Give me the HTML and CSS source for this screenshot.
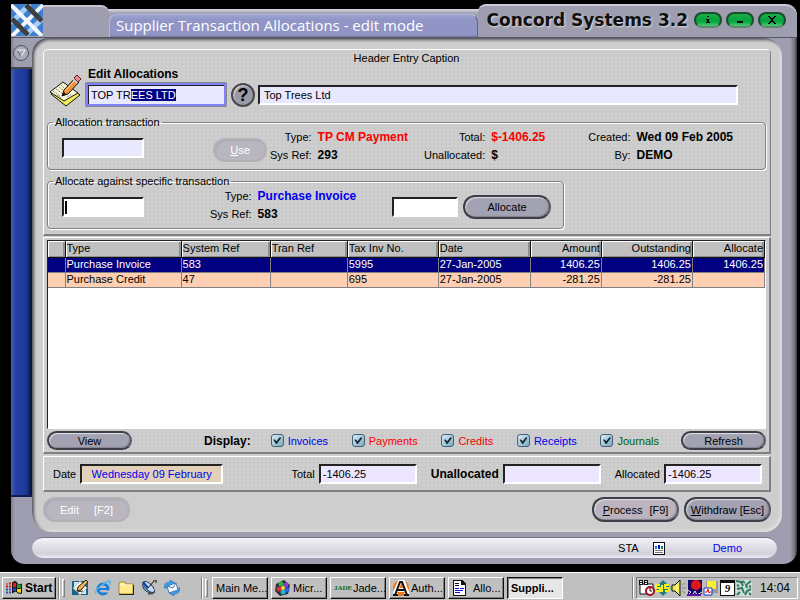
FILE: index.html
```html
<!DOCTYPE html>
<html lang="en">
<head>
<meta charset="utf-8">
<title>Supplier Transaction Allocations</title>
<link rel="stylesheet" href="styles.css">
</head>
<body>
<main class="window">
  <header class="titlebar">
    <svg class="logo" viewBox="0 0 32 32" aria-hidden="true">
      <rect width="32" height="32" fill="#3d7fce"/>
      <g fill="none" stroke-width="4">
        <path d="M0 1L31 32M32 1L1 32" stroke="#f4f8fc"/>
        <path d="M19 0L0 19M32 14L14 32" stroke="#a9cdf6" stroke-width="5"/>
        <path d="M15 1L31 17M1 15L17 31" stroke="#3d3f42" stroke-width="5"/>
        <path d="M4 5L11 12M21 22L27 28" stroke="#f4f8fc"/>
      </g>
    </svg>
    <div class="tab-left"></div>
    <h1 class="tab-title">Supplier Transaction Allocations - edit mode</h1>
    <div class="tab-brand">
      <span class="brand">Concord Systems 3.2</span>
      <button class="pill" type="button" aria-label="Information"><svg viewBox="0 0 8 8"><path d="M3 0h2v1H3zM2 3h3v3h1v1H2V6h1V4H2z"/></svg></button>
      <button class="pill" type="button" aria-label="Minimise"><svg viewBox="0 0 8 8"><path d="M1 5h6v2H1z"/></svg></button>
      <button class="pill" type="button" aria-label="Close"><svg viewBox="0 0 8 8"><path d="M0 0h2v1h1v1h2V1h1V0h2v1H7v1H6v1H5v2h1v1h1v1h1v1H6V7H5V6H3v1H2v1H0V7h1V6h1V5h1V3H2V2H1V1H0z"/></svg></button>
    </div>
  </header>

  <aside class="rail">
    <button class="rail-btn" type="button" aria-label="Open menu"><svg viewBox="0 0 14 14"><path d="M4 4h7L7 11z" fill="none" stroke="#f2f2f8"/><path d="M4 5l3 6" stroke="#55555f"/></svg></button>
    <div class="rail-bar"></div>
  </aside>

  <div class="client">
    <section class="panel panel-entry">
      <p class="caption">Header Entry Caption</p>
      <div class="supplier">
        <svg class="note" viewBox="0 0 33 32" aria-hidden="true">
          <path d="M2 19L16 9l15 11-14 11z" fill="#f5ee58" stroke="#111"/>
          <path d="M1 17L14 7l15 11-14 8z" fill="#f8f6d6" stroke="#111"/>
          <path d="M4 16l7 5M7 14l7 5M10 12l4 3M12 10l3 3M8 20l4 3M18 22l5-3" stroke="#8f8f78" stroke-dasharray="2 1"/>
          <path d="M13 21l2-6 11-12 4 4-11 12z" fill="#f0933a" stroke="#111"/>
          <path d="M16 16L26 5" stroke="#ffd596"/>
          <path d="M25 3l3-3 4 4-3 3z" fill="#ee8a94" stroke="#5c1820"/>
          <path d="M24 4l4 4" stroke="#c8c8d0" stroke-width="2"/>
          <path d="M13 21l2-4 2 2z" fill="#111"/>
        </svg>
        <div class="supplier-code">
          <label for="code">Edit Allocations</label>
          <input id="code" type="text" value="TOP TREES LTD" autocomplete="off" spellcheck="false">
        </div>
        <button class="help" type="button">?</button>
        <input class="field supplier-name" type="text" value="Top Trees Ltd" aria-label="Supplier name">
      </div>

      <fieldset class="group">
        <legend>Allocation transaction</legend>
        <input class="field ref" type="text" aria-label="Transaction reference">
        <button class="btn disabled use" type="button"><u>U</u>se</button>
        <dl class="facts facts-a"><dt>Type:</dt><dd class="red">TP CM Payment</dd><dt>Sys Ref:</dt><dd>293</dd></dl>
        <dl class="facts facts-b"><dt>Total:</dt><dd class="red">$-1406.25</dd><dt>Unallocated:</dt><dd>$</dd></dl>
        <dl class="facts facts-c"><dt>Created:</dt><dd>Wed 09 Feb 2005</dd><dt>By:</dt><dd>DEMO</dd></dl>
      </fieldset>

      <fieldset class="group group-specific">
        <legend>Allocate against specific transaction</legend>
        <input class="field ref white caret" type="text" aria-label="Specific transaction">
        <dl class="facts facts-d"><dt>Type:</dt><dd class="blue">Purchase Invoice</dd><dt>Sys Ref:</dt><dd>583</dd></dl>
        <input class="field amount white" type="text" aria-label="Amount">
        <button class="btn allocate" type="button">Allocate</button>
      </fieldset>
    </section>

    <section class="panel panel-list">
      <div class="grid-box">
        <table>
          <colgroup><col class="c-mark"><col class="c-type"><col class="c-sys"><col class="c-tran"><col class="c-tax"><col class="c-date"><col class="c-amt"><col class="c-out"><col class="c-alloc"></colgroup>
          <thead><tr><th></th><th>Type</th><th>System Ref</th><th>Tran Ref</th><th>Tax Inv No.</th><th>Date</th><th class="num">Amount</th><th class="num">Outstanding</th><th class="num">Allocate</th></tr></thead>
          <tbody>
            <tr class="selected"><td></td><td>Purchase Invoice</td><td>583</td><td></td><td>5995</td><td>27-Jan-2005</td><td class="num">1406.25</td><td class="num">1406.25</td><td class="num">1406.25</td></tr>
            <tr><td></td><td>Purchase Credit</td><td>47</td><td></td><td>695</td><td>27-Jan-2005</td><td class="num">-281.25</td><td class="num">-281.25</td><td class="num"></td></tr>
          </tbody>
        </table>
      </div>
      <div class="display">
        <button class="btn" type="button">View</button>
        <strong>Display:</strong>
        <div class="checks">
          <label class="blue"><input type="checkbox" checked>Invoices</label>
          <label class="red"><input type="checkbox" checked>Payments</label>
          <label class="red"><input type="checkbox" checked>Credits</label>
          <label class="blue"><input type="checkbox" checked>Receipts</label>
          <label class="green"><input type="checkbox" checked>Journals</label>
        </div>
        <button class="btn" type="button">Refresh</button>
      </div>
    </section>

    <section class="panel totals">
      <label for="date">Date</label><input id="date" class="field date" type="text" value="Wednesday 09 February">
      <label for="total" class="push">Total</label><input id="total" class="field sum" type="text" value="-1406.25">
      <label for="unalloc" class="next strong">Unallocated</label><input id="unalloc" class="field sum" type="text">
      <label for="alloc" class="next">Allocated</label><input id="alloc" class="field sum" type="text" value="-1406.25">
    </section>

    <div class="actions">
      <button class="btn tall disabled edit" type="button"><span>Edit</span><span>[F2]</span></button>
      <button class="btn tall warm" type="button"><span><u>P</u>rocess</span><span>[F9]</span></button>
      <button class="btn tall" type="button"><span><u>W</u>ithdraw [Esc]</span></button>
    </div>
  </div>

  <footer class="status">
    <span>STA</span>
    <svg width="12" height="13" viewBox="0 0 12 13" shape-rendering="crispEdges" aria-hidden="true"><path d="M0 0h12v13H0z" fill="#111"/><path d="M1 1h10v11H1z" fill="#fff"/><path d="M2 4h2v3H2z" fill="#168a9a"/><path d="M5 3h2v4H5z" fill="#00c"/><path d="M8 4h2v3H8z" fill="#16806a"/><path d="M2 8h8v1H2zM2 10h8v1H2z" fill="#777"/></svg>
    <span class="blue">Demo</span>
  </footer>
</main>

<nav class="taskbar">
  <button class="task start" type="button">
    <svg width="17" height="15" viewBox="0 0 17 15" aria-hidden="true"><path d="M6 2q4-3 5 0t5 1v10q-4 1-5-1t-5 1z" fill="#111"/><path d="M7 3q3-2 3 0v4q-1-1-3 0z" fill="#e02020"/><path d="M11 3q2 2 4 1v3q-2 1-4 0z" fill="#20a030"/><path d="M7 8q2-1 3 0v3q-1-1-3 0z" fill="#2040e0"/><path d="M11 8q2 1 4 0v4q-2 1-4-1z" fill="#f0d820"/><path d="M0 3h2v1H0zM3 2h2v2H3zM0 5h2v2H0zM3 5h2v2H3z" fill="#d02020"/><path d="M0 8h2v2H0zM3 8h2v2H3zM0 11h2v2H0zM3 11h2v2H3z" fill="#3050c0"/></svg>Start</button>
  <span class="sep"></span><span class="grip"></span>
  <div class="quick">
    <svg viewBox="0 0 16 16"><path d="M0 1h16v14H0z" fill="#1c668e"/><path d="M1 8l7-7 7 7-7 7z" fill="#f6f1d6"/><path d="M2 2h5L2 7zM14 14H9l5-5z" fill="#d2e8f2"/><path d="M5 11l1-4 8-7 2 2-7 8z" fill="#f0b45c" stroke="#222"/><path d="M5 12l6-1" stroke="#333"/></svg>
    <svg viewBox="0 0 16 16"><circle cx="8" cy="9" r="5" fill="none" stroke="#1e7ed4" stroke-width="3"/><path d="M4 8h9v2H4z" fill="#1e7ed4"/><path d="M10 10.500h6v2h-6z" fill="#c6c3c6"/><path d="M1 14Q-1 11 7 5t8-3q1 1-1 3" fill="none" stroke="#55b3f0" stroke-width="1.500"/></svg>
    <svg viewBox="0 0 16 16"><path d="M1 4l1-2h5l1 2h7v10H1z" fill="#ffe98a" stroke="#a58a2c"/><path d="M2 5h12" stroke="#fffbd8"/><path d="M1 14.500h15M15.500 5v10" stroke="#222"/></svg>
    <svg viewBox="0 0 16 16"><path d="M7 15l1-5 5 4z" fill="#555"/><path d="M2 2q-2 9 8 11 3 0 4-1z" fill="#7ab7e8" stroke="#234"/><ellipse cx="8" cy="7" rx="3" ry="7" transform="rotate(-45 8 7)" fill="#c3e2fa" stroke="#345"/><path d="M7 8l6-7M12 0h3v3" stroke="#111" fill="#f0ae25"/><path d="M2 2l5 6" stroke="#1840a0" stroke-width="2"/></svg>
    <svg viewBox="0 0 16 16"><path d="M0 8q0-6 6-6V0l5 3-5 4V5Q3 5 3 8zM16 8q0 6-6 6v2l-5-3 5-4v2q3 0 3-3z" fill="#3e9de8" stroke="#1a65b4" stroke-width=".5"/><path d="M3 6l9-3 2 7-9 3z" fill="#f5f9ff" stroke="#497bae"/><path d="M3 6l6 2 3-5" fill="none" stroke="#497bae"/></svg>
  </div>
  <span class="sep"></span><span class="grip"></span>
  <div class="tasks">
    <button class="task" type="button">Main Me...</button>
    <button class="task" type="button"><svg viewBox="0 0 16 16"><path d="M1 4l8-4 6 5-2 9-8 2-5-5z" fill="#302c3c"/><circle cx="6" cy="4" r="2.500" fill="#30b840"/><circle cx="11" cy="5" r="2.500" fill="#9040c8"/><circle cx="12" cy="10" r="2.500" fill="#3060e0"/><circle cx="8" cy="12" r="2.500" fill="#20b8d0"/><circle cx="4" cy="9" r="2.500" fill="#e03030"/><circle cx="8" cy="8" r="2" fill="#f0e040"/></svg>Micr...</button>
    <button class="task" type="button"><span class="jade">JADE</span>Jade...</button>
    <button class="task" type="button"><svg viewBox="0 0 16 16"><circle cx="8" cy="8" r="8" fill="#f07818"/><path d="M1 15L7 1h3l5 14M4 10h9M0 15h5M11 15h5" fill="none" stroke="#fff" stroke-width="4"/><path d="M2 15L7 2h2l5 13M4 10h8M0 15h5M11 15h5" fill="none" stroke="#111" stroke-width="2"/></svg>Auth...</button>
    <button class="task doc" type="button"><svg viewBox="0 0 16 16" shape-rendering="crispEdges"><path d="M1 0h9l4 4v12H1z" fill="#111"/><path d="M2 1h7v4h4v10H2z" fill="#fff"/><path d="M3 3h4v1H3zM3 5h4v1H3z" fill="#111"/><path d="M3 8h4v1H3zM8 8h4v1H8zM3 10h8v1H3zM3 12h5v1H3z" fill="#1010c0"/></svg>Allo...</button>
    <button class="task active" type="button">Suppli...</button>
  </div>
  <div class="tray-wrap">
    <span class="sep"></span>
    <div class="tray">
      <svg viewBox="0 0 16 16"><path d="M1 4h13v10H1z" fill="#fff" stroke="#111"/><path d="M0 0h4v5H0zM5 0h4v5H5z" fill="#111"/><path d="M1 1h2v1H1zM1 3h2v1H1zM6 1h2v1H6zM6 3h2v1H6z" fill="#fff"/><circle cx="11" cy="11" r="4" fill="#fff" stroke="#a01020" stroke-width="2"/><path d="M11 8v3h2" fill="none" stroke="#111"/></svg>
      <svg viewBox="0 0 16 16"><path d="M8 0l8 8-8 8-8-8z" fill="#188078"/><path d="M5 5H1v3h4v3H1M7 5v7M14 5h-4v3h4v3h-4" fill="none" stroke="#f8ee20" stroke-width="2"/></svg>
      <svg viewBox="0 0 16 16"><path d="M1 5h3l5-5v16l-5-5H1z" fill="#f4e840" stroke="#111"/><path d="M6 4v8" stroke="#fff"/><path d="M11 5l3-2M11 8h4M11 11l3 2" stroke="#888"/></svg>
      <svg viewBox="0 0 16 16"><path d="M1 0h14v14H1z" fill="#180868"/><circle cx="9" cy="5" r="5" fill="#e01818"/><path d="M0 10l4 2-3 3M6 14l2-3 2 4 5-3" fill="none" stroke="#e8e8f8"/><path d="M0 15h14" stroke="#6010a0" stroke-width="2"/></svg>
      <svg viewBox="0 0 16 16"><path d="M3 1h12v12H3z" fill="#999"/><path d="M4 1h9v8H4z" fill="#f8ef30"/><path d="M1 8h8v7H1z" fill="#fff" stroke="#1038d0"/><path d="M2 12h2l1-3 1 4 1-1h2" fill="none" stroke="#e01818"/></svg>
      <span class="cal">9</span>
      <svg viewBox="0 0 16 16"><path d="M0 0h16v16H0z" fill="#d4dcd8"/><path d="M0 1l5 1 2 4M15 1l-5 4 1 3M1 9l5-1 2 5M15 9l-4 2-2 4M1 15l3-3M13 13l2 2M6 1l3 2M1 5l2 1M13 6l2 1" fill="none" stroke="#2c7c64" stroke-width="2"/></svg>
      <time>14:04</time>
    </div>
  </div>
</nav>
<script src="app.js"></script>
</body>
</html>
```
FILE: styles.css
```css
* { box-sizing: border-box; }

body {
  margin: 0;
  min-height: 100vh;
  display: flex;
  flex-direction: column;
  background: #000;
  color: #000;
  font: 11px/14px "Liberation Sans", Arial, sans-serif;
}

button, input { font: inherit; color: inherit; margin: 0; }
svg { display: block; flex: none; }
h1, p, dl, dd, fieldset { margin: 0; padding: 0; }

.blue { color: #0000f0; }
.red { color: #fa0000; }
.green { color: #006400; }

/* Window frame */
.window {
  flex: 1;
  margin: 4px 3px 8px 11px;
  display: grid;
  grid-template-columns: 21px minmax(0, 1fr);
  grid-template-rows: 34px 1fr 32px;
  border-radius: 0 10px 14px 14px;
  background: linear-gradient(90deg, #80808e 0, #9f9eb0 4px, #9f9eb0 calc(100% - 7px), #70707c calc(100% - 2px), #303038 100%);
}

.titlebar {
  grid-column: 1 / -1;
  display: flex;
  align-items: flex-end;
  background: linear-gradient(#000 5px, #dadae2 5px, #a3a3b5 9px);
  border-radius: 0 12px 0 0;
  border-bottom: 1px solid #555563;
}
.logo { width: 32px; height: 32px; align-self: flex-start; }
.tab-left {
  width: 66px;
  height: 32px;
  border-top: 2px solid #c4c4d0;
  border-radius: 0 8px 0 0;
  background: #9f9eb0;
}
.tab-title {
  flex: 1;
  height: 23px;
  padding-left: 6px;
  border-top: 1px solid #b4b8dc;
  border-left: 1px solid #b4b8dc;
  border-right: 1px solid #5c6094;
  border-radius: 8px 8px 0 0;
  background: linear-gradient(#9ca2d2, #9095c6 5px, #9095c6 20px, #70759f);
  color: #fff;
  font: 15px/21px "Open Sans", "Noto Sans", sans-serif;
  white-space: nowrap;
}
.tab-brand {
  height: 33px;
  padding: 0 11px 4px 9px;
  display: flex;
  align-items: center;
  gap: 4px;
  border-top: 2px solid #cacad6;
  border-radius: 8px 12px 0 0;
  background: #9f9eb0;
}
.brand {
  margin-right: 2px;
  color: #111;
  font: bold 17px/20px "DejaVu Sans", sans-serif;
  text-shadow: 1px 1px 2px #ddd;
}
.pill {
  width: 28px;
  height: 16px;
  padding: 0;
  display: grid;
  place-items: center;
  border: 2px solid #194c2a;
  border-bottom-color: #5c8c6c;
  border-radius: 8px;
  background: linear-gradient(#18b048, #06a03c 60%, #48cc74);
}
.pill svg { width: 8px; height: 8px; }

.rail { display: flex; flex-direction: column; padding-bottom: 35px; }
.rail-btn {
  width: 16px;
  height: 16px;
  margin: 7px 2px 6px;
  padding: 0;
  border: 1px solid #50505a;
  border-radius: 50%;
  background: #aaaab8;
}
.rail-btn svg { width: 14px; height: 14px; }
.rail-bar {
  flex: 1;
  border-top: 2px solid #46464e;
  border-bottom: 2px solid #101c50;
  background: linear-gradient(90deg, #4560b0 0, #2440a4 5px, #1c3898 15px, #0c1844 20px, #080c20);
}

/* Client area */
.client {
  margin-right: 15px;
  padding: 11px 11px 10px 11px;
  display: flex;
  flex-direction: column;
  border-radius: 16px 18px 18px 20px;
  background: #cecece;
  box-shadow: inset 2px 2px 3px #55555f, inset -2px -2px 3px #e0e0e4;
}
.panel {
  border: 1px solid #fff;
  border-right: 2px solid #808080;
  border-bottom: 2px solid #808080;
  background-color: #cecece;
  background-image: radial-gradient(circle, #c7c7c7 1px, transparent 1px);
  background-size: 4px 4px;
}
.panel-entry { padding: 1px 4px 5px 3px; border-radius: 5px 5px 0 0; border-right-width: 1px; }
.caption { text-align: center; line-height: 15px; }

.supplier {
  padding-right: 28px;
  display: flex;
  align-items: flex-end;
  height: 41px;
}
.note { width: 33px; height: 32px; margin-left: 2px; }
.supplier-code { margin-left: 3px; display: flex; flex-direction: column; }
.supplier-code label {
  padding-left: 3px;
  font: bold 12px/16px "Liberation Sans", sans-serif;
}
.supplier-code input {
  width: 142px;
  height: 25px;
  padding: 0 3px;
  border: 3px solid #8080f8;
  border-radius: 2px;
  outline: 1px solid #88888c;
  outline-offset: -1px;
  background: #e8e8ff;
  box-shadow: inset 1px 1px #222;
}
.supplier-code input::selection { background: #000080; color: #fff; }
.help {
  width: 24px;
  height: 24px;
  margin: 0 3px 0 4px;
  padding: 0;
  border: 2px solid #48484e;
  border-radius: 50%;
  background: #9a9aa6;
  box-shadow: inset 1px 1px 1px #ddd;
  font: bold 18px/18px "Liberation Sans", sans-serif;
}

.field {
  height: 20px;
  min-width: 0;
  padding: 1px 2px;
  border: 2px solid #fff;
  border-top-color: #222;
  border-left-color: #222;
  border-radius: 0;
  background: #e8e8ff;
  outline: 0;
}
.white { background-color: #fff; }
.supplier-name { flex: 1; padding-left: 4px; margin-bottom: 2px; }

.group {
  height: 54px;
  margin-top: 9px;
  padding: 0 0 0 14px;
  display: flex;
  align-items: flex-start;
  border: 1px solid #808080;
  border-radius: 4px;
  box-shadow: 1px 1px #fff, inset 1px 1px #fff;
  min-width: 0;
}
.group legend { margin-left: -9px; padding: 0 2px; line-height: 12px; height: 12px; }
.ref { width: 82px; margin-top: 10px; }
.caret { background-image: linear-gradient(#000, #000); background-size: 2px 13px; background-position: 1px 2px; background-repeat: no-repeat; }
.use { width: 54px; margin: 10px 0 0 69px; }
.facts {
  display: grid;
  grid-template-columns: auto auto;
  column-gap: 6px;
  line-height: 18px;
}
.facts dt { text-align: right; }
.facts dd { font-size: 12px; font-weight: bold; white-space: nowrap; }
.facts-a { margin-left: 3px; }
.facts-b { margin-left: 16px; }
.facts-c { margin: 0 32px 0 auto; }
.facts-d { margin-left: 66px; }
.group-specific { width: 517px; margin-top: 5px; }
.amount { width: 66px; margin: 10px 5px 0 auto; }
.allocate { width: 88px; margin: 8px 12px 0 0; }

.btn {
  height: 24px;
  padding: 0;
  border: 2px solid #3e3e48;
  border-right-color: #5c5c68;
  border-radius: 12px;
  background: #a2a2b2;
  box-shadow: inset 1px 1px 1px #e0e0e8, inset -1px -1px 1px #84848e;
}
.btn.disabled {
  border-color: #b4b0b8;
  background: #b9b6c0;
  box-shadow: inset 1px 1px 2px #aaa6b0;
  color: #fff;
}

/* Transaction list */
.panel-list {
  flex: 1;
  margin-top: 1px;
  padding: 2px 3px;
  display: flex;
  flex-direction: column;
}
.grid-box {
  flex: 1;
  border: 1px solid #222;
  border-right-color: #fff;
  border-bottom-color: #fff;
  background: #fff;
}
table { width: 100%; table-layout: fixed; border-collapse: collapse; line-height: 13px; }
.c-mark { width: 17px; }
.c-type { width: 116px; }
.c-sys { width: 89px; }
.c-tran { width: 77px; }
.c-tax { width: 91px; }
.c-date { width: 92px; }
.c-amt { width: 71px; }
.c-out { width: 91px; }
.c-alloc { width: 72px; }
th {
  height: 16px;
  padding: 0 1px;
  border-right: 1px solid #111;
  border-bottom: 1px solid #111;
  background: #c0c0c0;
  box-shadow: inset 1px 1px #fff, inset -2px -1px #909090;
  font-weight: normal;
  text-align: left;
}
td {
  height: 15px;
  padding: 0 1px;
  border-right: 1px solid #808080;
  border-bottom: 1px solid #808080;
  background: #ffcfb3;
}
.selected td { background: #000080; color: #fff; }
.num { text-align: right; }

.display { display: flex; align-items: center; margin-top: 2px; }
.display .btn { width: 85px; height: 19px; }
.display strong { margin: 0 20px 0 72px; font-size: 12px; }
.checks { flex: 1; display: flex; justify-content: space-between; padding-right: 22px; }
.checks label { display: flex; align-items: center; gap: 4px; }
.checks input {
  appearance: none;
  width: 13px;
  height: 13px;
  display: grid;
  place-items: center;
  border: 1px solid #446074;
  border-radius: 3px;
  background: linear-gradient(135deg, #d8ecf4, #78a8c0);
}
.checks input:checked::before {
  content: "";
  width: 8px;
  height: 7px;
  background: #182830;
  clip-path: polygon(0 40%, 20% 35%, 40% 60%, 85% 0, 100% 15%, 45% 100%, 35% 100%);
}

/* Totals */
.totals {
  margin-top: 2px;
  padding: 7px 7px 6px 9px;
  display: flex;
  align-items: center;
}
.totals label { margin-right: 4px; }
.totals .push { margin-left: auto; }
.totals .next { margin-left: 14px; }
.totals .strong { font-size: 12px; font-weight: bold; }
.sum { width: 98px; background: #ece6ff; }
.date { width: 143px; background: #e2d0b8; color: #0000f0; text-align: center; }

.actions { display: flex; gap: 5px; margin-top: 5px; }
.tall { width: 87px; height: 25px; display: flex; align-items: center; justify-content: center; gap: 7px; white-space: nowrap; }
.tall.warm { background: #bbb3bd; }
.tall.edit { margin-right: auto; gap: 15px; }

.status {
  grid-column: 2;
  height: 21px;
  margin: 5px 20px 0 0;
  padding: 0 35px;
  display: flex;
  align-items: center;
  justify-content: flex-end;
  gap: 14px;
  border-top: 1px solid #777783;
  border-radius: 11px;
  background: linear-gradient(#f4f2fa, #dcdce4 50%, #d4d0dc 80%, #f0eef6);
}
.status .blue { margin-left: 34px; }

/* Taskbar */
.taskbar {
  height: 28px;
  padding: 4px 2px 2px;
  display: flex;
  align-items: center;
  border-top: 1px solid #fff;
  background: #c0c0c0;
}
.task {
  height: 22px;
  padding: 0 3px;
  display: flex;
  align-items: center;
  gap: 2px;
  border: 1px solid #fff;
  border-right-color: #111;
  border-bottom-color: #111;
  background: #c0c0c0;
  box-shadow: inset -1px -1px #808080;
  white-space: nowrap;
}
.start { width: 54px; font-weight: bold; font-size: 12px; }
.sep { width: 2px; height: 22px; margin-left: 2px; border-left: 1px solid #808080; border-right: 1px solid #fff; }
.grip { width: 3px; height: 18px; margin-left: 2px; border: 1px solid #fff; border-right-color: #808080; border-bottom-color: #808080; }
.quick { display: flex; gap: 7px; margin: 0 19px 0 7px; }
.quick svg, .tray svg, .task svg { width: 16px; height: 16px; }
.start svg { width: 17px; }
.tasks { flex: 1; display: flex; gap: 3px; margin-left: 4px; }
.tasks .task { width: 56px; overflow: hidden; }
.tasks .doc { gap: 5px; }
.tasks .active {
  border-color: #111 #fff #fff #111;
  background: #e6e6e6;
  box-shadow: inset 1px 1px #808080;
  font-weight: bold;
}
.jade { width: 17px; color: #086818; font: bold 7px/8px "Liberation Serif", serif; }
.tray-wrap { display: flex; align-items: center; gap: 2px; }
.tray {
  height: 22px;
  padding: 0 7px 0 2px;
  display: flex;
  align-items: center;
  border: 1px solid #808080;
  border-right-color: #fff;
  border-bottom-color: #fff;
}
.cal {
  width: 15px;
  height: 16px;
  margin: 0 1px;
  border: 1px solid #111;
  border-top-width: 3px;
  background: #fff;
  font: italic bold 11px/11px "Liberation Serif", serif;
  text-align: center;
}
.tray time { margin-left: 8px; font-size: 12px; }
```
FILE: app.js
```js
// Type-ahead: the completed part of the supplier code stays selected.
const code = document.getElementById("code");
code.focus();
code.setSelectionRange(6, code.value.length);
```
